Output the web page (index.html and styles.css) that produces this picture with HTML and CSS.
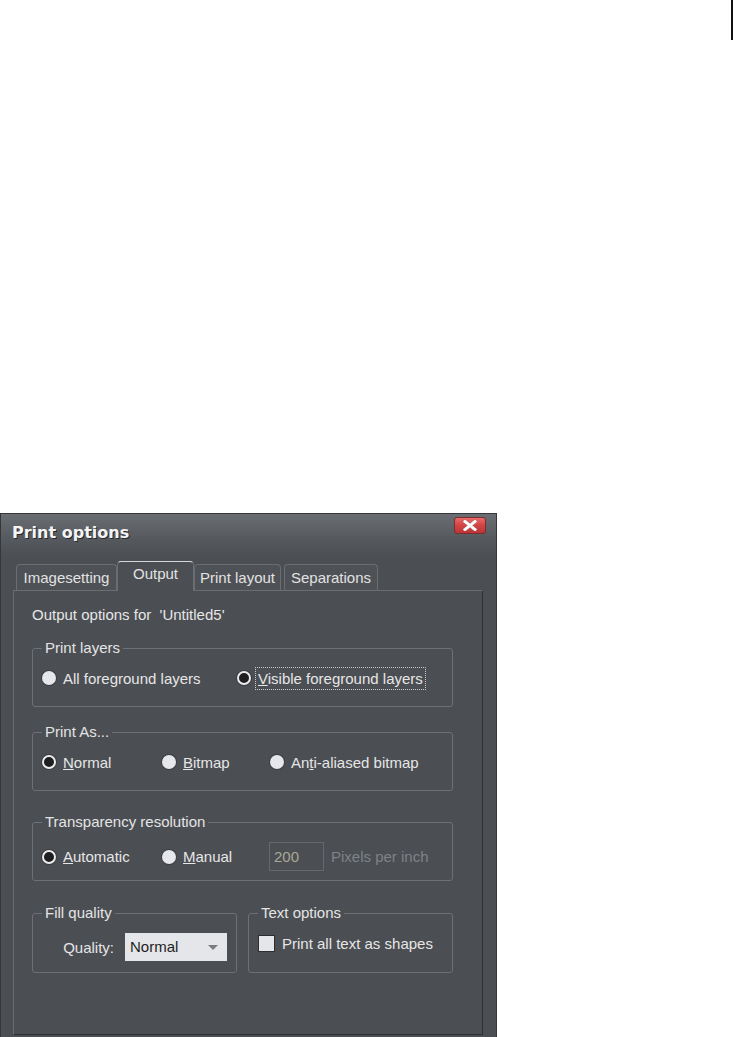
FILE: index.html
```html
<!DOCTYPE html>
<html lang="en">
<head>
  <meta charset="UTF-8" />
  <title>Print options</title>
  <link rel="stylesheet" href="styles.css">
</head>
<body>
  <div class="corner-mark"></div>

  <div class="dialog">
    <div class="titlebar">
      <span class="title">Print options</span>
      <button class="close-btn" aria-label="Close">
        <svg width="14" height="11" viewBox="0 0 14 11">
          <line x1="2" y1="1.5" x2="12" y2="9.5" stroke="#b9b9b9" stroke-width="3.4" stroke-linecap="square"></line>
          <line x1="12" y1="1.5" x2="2" y2="9.5" stroke="#b9b9b9" stroke-width="3.4" stroke-linecap="square"></line>
          <line x1="2" y1="1.5" x2="12" y2="9.5" stroke="#ffffff" stroke-width="2.4" stroke-linecap="square"></line>
          <line x1="12" y1="1.5" x2="2" y2="9.5" stroke="#ffffff" stroke-width="2.4" stroke-linecap="square"></line>
        </svg>
      </button>
    </div>

    <div class="tabs">
      <div class="tab">Imagesetting</div>
      <div class="tab active">Output</div>
      <div class="tab">Print layout</div>
      <div class="tab">Separations</div>
    </div>

    <div class="panel">
      <p class="intro">Output options for &nbsp;'Untitled5'</p>

      <!-- Print layers -->
      <fieldset class="group group-first">
        <legend>Print layers</legend>
        <div class="row row-layers">
          <label class="radio"><span class="dot"></span>All foreground layers</label>
          <label class="radio"><span class="dot on"></span><span class="focus"><u>V</u>isible foreground layers</span></label>
        </div>
      </fieldset>

      <!-- Print as -->
      <fieldset class="group group-as">
        <legend>Print As...</legend>
        <div class="row row-as">
          <label class="radio"><span class="dot on"></span><span><u>N</u>ormal</span></label>
          <label class="radio"><span class="dot"></span><span><u>B</u>itmap</span></label>
          <label class="radio"><span class="dot"></span><span>An<u>t</u>i-aliased bitmap</span></label>
        </div>
      </fieldset>

      <!-- Transparency -->
      <fieldset class="group group-res">
        <legend>Transparency resolution</legend>
        <div class="row row-res">
          <label class="radio"><span class="dot on"></span><span><u>A</u>utomatic</span></label>
          <label class="radio"><span class="dot"></span><span><u>M</u>anual</span></label>
          <div class="res-field">
            <span class="num-input">200</span>
            <span class="muted">Pixels per inch</span>
          </div>
        </div>
      </fieldset>

      <div class="split">
        <fieldset class="group half">
          <legend>Fill quality</legend>
          <div class="row row-fill">
            <span>Quality:</span>
            <div class="select">Normal<span class="caret"></span></div>
          </div>
        </fieldset>
        <fieldset class="group half">
          <legend>Text options</legend>
          <div class="row">
            <label class="check"><span class="box"></span>Print all text as shapes</label>
          </div>
        </fieldset>
      </div>
    </div>
  </div>
</body>
</html>
```

FILE: styles.css
```css
body {
  margin: 0;
  background: #fff;
  font-family: "Liberation Sans", Arial, sans-serif;
  font-size: 15px;
  color: #e6e6e6;
}
.corner-mark {
  margin-left: 731px;
  width: 2px;
  height: 40px;
  background: #111;
}
.dialog {
  box-sizing: border-box;
  margin-top: 473px;
  width: 497px;
  height: 524px;
  background: #4b4e53;
  border: 1px solid #35373b;
  border-bottom: none;
}
.titlebar {
  display: flex;
  justify-content: space-between;
  align-items: flex-start;
  height: 43px;
  padding: 3px 10px 0 11px;
  box-sizing: border-box;
  background: linear-gradient(#6a6d72, #55585d 60%, #4b4e53);
}
.title {
  margin-top: 6px;
  font-family: "DejaVu Sans", sans-serif;
  font-weight: bold;
  font-size: 16px;
  line-height: 20px;
  color: #f4f4f4;
  text-shadow: 1px 1px 0 #26282b;
}
.close-btn {
  display: flex;
  align-items: center;
  justify-content: center;
  width: 32px;
  height: 17px;
  padding: 0;
  border: 1px solid #7a2d2d;
  border-radius: 3px;
  background: linear-gradient(#ea6a6a, #d04444 50%, #bd3535);
  cursor: pointer;
}
.tabs {
  display: flex;
  align-items: flex-end;
  height: 33px;
  padding-left: 15px;
}
.tab {
  box-sizing: border-box;
  height: 26px;
  padding-top: 1px;
  line-height: 24px;
  text-align: center;
  border: 1px solid #6a6d72;
  border-bottom: none;
  border-radius: 4px 4px 0 0;
  background: #4e5156;
  color: #e2e2e2;
  white-space: nowrap;
}
.tab:nth-child(1) { width: 101px; }
.tab:nth-child(2) { width: 77px; }
.tab:nth-child(3) { width: 87px; }
.tab:nth-child(4) { width: 94px; margin-left: 3px; }
.tab.active {
  position: relative;
  z-index: 1;
  height: 30px;
  margin-bottom: -1px;
  padding-top: 0;
  line-height: 24px;
  border-top-color: #d6d6d6;
  background: #4b4e53;
}
.panel {
  box-sizing: border-box;
  margin-left: 12px;
  width: 470px;
  height: 445px;
  padding: 14px 0 0 18px;
  border: 1px solid #6a6d72;
  border-right-color: #2f3134;
  border-bottom-color: #2f3134;
}
.intro {
  margin: 0;
  line-height: 20px;
}
.group {
  box-sizing: border-box;
  width: 421px;
  margin: 0;
  padding: 12px 9px 18px;
  border: 1px solid #6d7075;
  border-radius: 3px;
}
.group-first { margin-top: 15px; }
.group-as { margin-top: 17px; }
.group-res { margin-top: 23px; }
.group legend {
  margin-left: 0;
  padding: 0 3px;
  line-height: 16px;
  color: #e4e4e4;
}
.row {
  display: grid;
  align-items: center;
  height: 20px;
}
.row-layers { grid-template-columns: 195px auto; }
.row-as { grid-template-columns: 120px 108px auto; }
.row-res { grid-template-columns: 120px 107px auto; }
.radio {
  display: flex;
  align-items: center;
  gap: 7px;
  white-space: nowrap;
}
.dot {
  box-sizing: border-box;
  width: 14px;
  height: 14px;
  border-radius: 50%;
  background: #e6e7ea;
  box-shadow: 0 0 0 1px #3c3e42;
}
.dot.on {
  border: 2px solid #ececee;
  background: #1f1f21;
}
.focus {
  outline: 1px dotted #c9c9c9;
  outline-offset: 2px;
}
.res-field {
  display: flex;
  align-items: center;
  gap: 7px;
}
.num-input {
  box-sizing: border-box;
  width: 55px;
  height: 29px;
  padding-left: 4px;
  line-height: 27px;
  border: 1px solid #65686d;
  color: #a9a895;
}
.muted {
  color: #7f8287;
}
.split {
  display: flex;
  gap: 11px;
  margin-top: 24px;
}
.group.half {
  width: 205px;
  padding-bottom: 11px;
}
.row-fill {
  display: flex;
  justify-content: flex-end;
  gap: 11px;
  height: 28px;
}
.select {
  position: relative;
  box-sizing: border-box;
  width: 102px;
  height: 28px;
  padding-left: 5px;
  line-height: 28px;
  background: #e5e6e9;
  color: #1e1e1e;
}
.caret {
  position: absolute;
  right: 9px;
  top: 12px;
  border-left: 5px solid transparent;
  border-right: 5px solid transparent;
  border-top: 5px solid #7a7c80;
}
.check {
  display: flex;
  align-items: center;
  gap: 7px;
  white-space: nowrap;
}
.box {
  box-sizing: border-box;
  width: 17px;
  height: 17px;
  background: #e5e6e9;
  border: 1px solid #2c2e31;
}
```
